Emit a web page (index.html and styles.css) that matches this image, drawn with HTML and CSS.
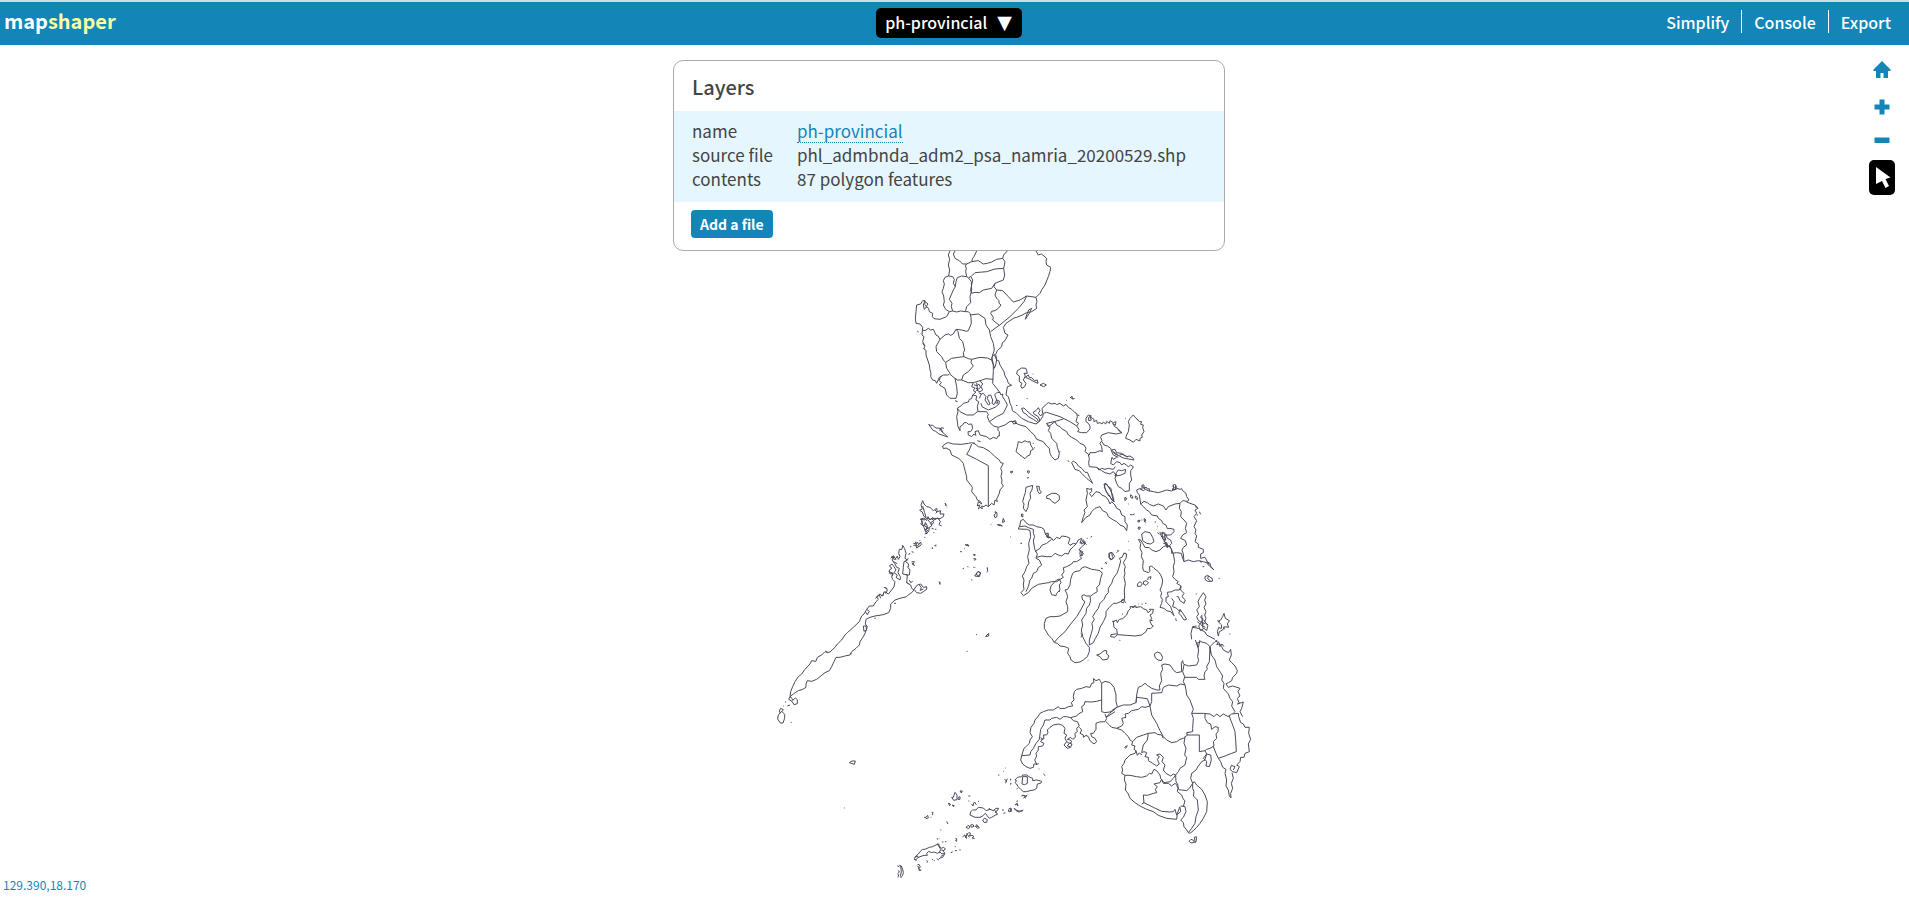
FILE: index.html
```html
<!DOCTYPE html>
<html lang="en">
<head>
<meta charset="utf-8">
<title>mapshaper</title>
<link rel="stylesheet" href="styles.css">
</head>
<body>
<header class="page-header">
  <a class="logo" href="#">map<span class="logo-accent">shaper</span></a>
  <div class="layer-slot"><button class="layer-btn" type="button">ph-provincial<span class="arrow">▼</span></button></div>
  <nav class="mode-nav">
    <button type="button">Simplify</button>
    <button type="button">Console</button>
    <button type="button">Export</button>
  </nav>
</header>
<main class="stage">
  <svg class="map" viewBox="0 45 1909 858" role="img" aria-label="ph-provincial">
    <!-- Luzon, north and centre -->
    <g transform="translate(900 240) scale(.33333)">
      <path d="M150 33L145 45 149 58 145 75 149 90 146 108M146 108L135 112 130 122 133 132 130 145 126 155 131 168 133 185 130 195 137 208 148 215 158 213 154 200 156 190 148 178 160 150 166 140 160 130 163 118 158 110 146 108M166 140L168 125 172 113 185 108 200 110 207 115 214 125 215 150 210 170 212 188 200 200 196 215 182 213 170 216 158 213M200 110L197 95 199 85 196 78 200 72 188 72 178 62 165 55 160 42 165 33M230 33L222 50 218 55 215 65 200 72M215 65L235 62 250 72 262 70 275 66 290 58 308 55 311 45 322 33M308 55L315 65 311 85 314 105 310 120 285 130 275 145 250 150 238 158 225 157 215 160 212 150 218 120 212 108 207 115M215 108L225 98 260 95 285 87 311 85M285 130L282 140 290 150 285 165 290 175 297 182 297 190 303 195 295 205 285 212 275 214 272 220 280 232 278 240 298 256M290 150L308 152 325 170 340 186 360 180 380 168 408 172M408 33L415 45 424 42 432 48 440 55 438 65 440 75 452 82 450 95 445 110 441 120 435 135 426 148 420 160 408 172 411 185 408 195 410 205 395 215 380 218 367 225 350 232 342 234 330 242 318 250 310 262 315 280 324 285 315 302 307 308 305 320 292 332 287 343M380 168L372 185 355 205 330 230 298 256 285 265 272 275M395 205L388 220 376 238 380 225 386 210Z"/>
      <path d="M148 215L140 230 120 238 102 236 97 230 98 220 88 215 86 205 78 200 84 192 76 185 74 193 80 200 73 208 70 195 75 182 68 182 62 192 50 195 48 215 46 235 48 250 60 252 68 262 66 285 72 290 68 305 75 318 72 325 78 332 78 345 88 375 90 390 93 400 92 410 98 420 106 422 110 430 118 412 125 408M66 270L75 272 85 265 92 270 100 268 108 285 114 288 120 298 135 285 145 282 152 286 160 282 168 268 185 270 200 274 205 272 214 250 213 232 210 220 205 215 196 215M210 225L235 222 255 235 258 255 268 270 272 290 280 310 283 330 278 345 275 360M120 298L108 320 110 335 125 350 130 360 137 367 155 355 175 352 192 350 190 338 194 330 188 305 178 295 174 275 168 268M137 367L140 385 150 400 145 405 130 405 120 412M192 350L205 356 215 358 240 352 262 354 275 360M215 358L213 368 220 378 205 395 190 405 185 420 172 420 165 415 150 403M185 420L205 428 220 428 240 422 258 416 280 418M275 360L280 375 280 395 278 430 290 445 300 458M287 343L290 360 296 362 300 375 312 395 315 408 322 420 325 430 335 436 322 440 318 465 325 470 328 480 330 490 335 500 337 512 350 520 365 535 385 545 408 552M283 343L275 352 283 385 287 375 290 360 283 343M120 412L118 422 124 428 118 435 135 445 140 465 150 475 168 475 172 460 170 440 165 415"/>
      <path d="M220 428L215 440 225 444 220 452 228 456 218 465 230 468 228 480 236 485 232 500 234 515M240 422L248 432 243 440 248 450 240 455 228 450M222 434l9 4 5 -6 6 10 -8 6 -7 -4M230 428l3 24M236 458l8 4M218 465L215 476 208 478 205 486 190 490 185 496 172 505 180 515 200 525 220 525 232 515M238 475L244 462 250 460 258 470 255 480 265 495 270 492 262 475 265 466 272 465 278 480 276 490 282 494 290 480 284 464 292 457 300 458 303 465 308 462 308 470 317 485 322 495 315 510 310 520 290 530 268 545 262 530 265 524 260 515 232 515M243 490L246 500 265 510 285 502 297 492 298 483 290 480 293 490 285 488M172 505L174 515 170 530 174 560 180 572 180 560 188 555 192 548 200 548 205 553 215 552 218 565 212 575 204 575 205 585 215 590 222 582 228 586 225 575 235 572 240 585 260 590 270 598 280 592 290 596 294 588 298 588 298 575 293 570 295 562 280 558 268 545M295 562L315 555 330 544 345 545 348 550 360 555 378 560 392 575 403 585 410 598 430 605 440 618 448 625 450 640 455 650 465 660 475 655 478 640 472 622 470 610 455 595 452 580 445 572 450 560 440 550 470 543 490 537M337 545l10 -3 2 8 -8 2z"/>
      <path d="M352 392L365 384 378 385 382 400 372 400 376 408 370 420 378 430 374 440 366 445 362 438 366 430 358 425 358 408 350 402ZM376 412L385 405 388 413 395 413 403 422 412 420 414 430 400 424 390 418ZM398 402h2M420 435l10 -5 9 5 -8 5zM348 497l4 -1M380 476h3M498 481h2M510 474l6 -5 2 8 6 -2M512 472l6 6M365 505L372 504 380 512 395 525 405 532 415 540 410 545 400 538 385 530 378 522 370 518ZM408 552L420 542 415 530 402 522 400 516 408 512 415 503 420 512 415 520 422 528 428 520 426 505 440 492 445 488 455 492 465 490 470 494 480 490 490 498 498 493 505 502 515 508 525 518 530 520 532 530 528 545 536 550 530 558 510 545 480 530 440 517 430 520 428 530 420 542ZM530 558L537 568 533 575 545 578 560 578 570 567 570 558 565 550 558 545 558 535 565 525 574 528 566 532 566 542 574 540 570 530 582 538 582 545 590 541 592 550 600 548 606 552 610 546 617 552 620 544 628 550 630 542 640 548 648 545 646 556 638 550 644 560 653 565 655 570 665 580M532 525l6 2M676 535h2M700 525L708 535 714 540 718 545 725 545 722 553 730 555 728 563 732 575 725 585 727 592 720 595 720 603 708 598 700 607 690 600 677 595 680 585 685 575 688 555 685 545 690 535ZM52 272l3 5M60 283l2 -2M68 310l6 8M70 325l4 4M86 553l6 3 6 0 10 8 12 1 5 10 8 6 10 10 -14 -5 -12 -4 -10 -8 -8 -3zM118 572l6 -9 8 2M122 564l6 12M165 482l8 3"/>
    </g>
    <!-- Mindoro, Bicol, Masbate, Panay -->
    <g transform="translate(900 400) scale(.33333)">
      <path d="M130 146L128 138 138 130 145 128 160 132 185 133 205 130 215 128 225 132 235 140 250 143 270 155 285 170 298 180 302 188 310 190 302 205 306 215 303 230 306 240 305 250 310 258 300 270 298 280 290 297 292 305 285 300 282 315 275 310 265 320 258 315 252 320 245 318 247 326 240 322 235 327 240 315 232 318 235 305 245 312 242 305 232 300 228 290 215 275 217 262 212 255 200 240 200 230 196 215 192 200 190 190 180 178 175 175 165 170 155 165 150 150 138 144ZM215 132L208 150 200 163 230 178 265 197 265 320M232 122l10 3M220 128l5 2M355 125L365 128 375 122 382 126 390 125 392 135 400 148 392 152 390 165 382 168 375 176 367 170 360 165 348 155 352 140ZM398 130h3M402 143l3 1M440 70L445 80 465 65 470 75 480 80 485 86 500 95 505 105 515 112 530 120 540 130 552 135 558 145 555 155 568 165M568 165L570 158 585 158 600 152 607 155 605 140 600 130 606 122 602 112 605 105 625 98 650 102 665 98 660 92 655 88M478 155h3M503 182l5 3"/>
      <path d="M606 125L612 135 622 138 632 145 635 155 640 165 655 172 M565 165L568 175 566 190 568 200 590 202 597 210 605 205 615 208 625 205 640 208 646 200M590 202L605 212 615 218 630 222 640 215 648 225M640 195L632 190 636 172 640 178 650 172M640 195L650 185 660 188 665 195 672 190 685 200 692 195 700 200 697 206 692 212 692 225 695 240 688 250 688 272 675 275 665 265 655 260 650 250 645 235 650 222M655 210l10 2 12 -4 -2 12 -15 6 -15 2 4 -10zM635 150L645 148 650 158 665 160 680 170 690 168 700 175 702 180 685 177 670 174 658 168 645 162ZM640 155l14 10 M658 165l12 -2 M670 165l14 6M515 188L520 183 530 190 535 198 545 205 555 217 562 217 570 235 578 250 572 245 560 235 545 220 538 212 525 208ZM612 252L618 250 625 260 633 265 635 280 637 290 642 305 635 300 628 285 618 275ZM560 265L570 268 575 265 575 275 568 280 575 290 588 275 600 278 605 285 617 290 625 300 630 312 635 305 645 315 650 325 660 330 665 345 675 350 675 365 682 375 680 392 672 380 660 375 650 365 640 360 625 350 620 338 608 332 600 320 585 325 575 335 570 345 558 352 545 368 550 350 555 338 552 330 562 320 558 300 562 280Z"/>
      <path d="M378 262L398 256 396 270 390 280 392 295 386 305 384 322 378 335 370 325 372 312 368 305 372 290 376 278ZM410 258l8 2 0 10 6 5 -5 7 -6 -8zM440 288L455 280 468 280 478 287 478 300 465 310 455 304 450 297 440 295ZM332 214l6 0 -2 5 -4 -1zM383 212l6 2 -3 6 -4 -3zM381 234l6 -1M365 342l4 1 -1 8 -4 -2zM355 387L360 375 362 362 370 358 378 368 388 375 400 375 410 380 425 383 432 388 435 400 445 400 445 410 455 415 460 422 470 412 480 416 485 408 500 410 510 415 505 430 510 436 520 430 528 432 535 420 545 415 540 430 548 425 555 432 545 440 537 450 548 455 545 462 540 470 545 475 530 485 520 485 515 492 500 500 490 503 492 515 485 525 490 532 470 545 455 545 445 548 415 553 395 565 385 578 370 587 363 578 372 568 370 555 372 540 367 528 375 515 380 500 387 490 383 470 388 450 386 430 392 410 390 392 380 388 355 387M360 380L375 378 385 383 400 388 400 400 404 410 400 420 402 435 405 450 412 462 408 475 418 480 425 495 415 503 410 515 400 520 395 535 390 540 385 560 378 575M405 455L420 445 425 436 440 430 455 418M410 472L425 468 440 470 455 470 465 460 475 465 485 468 495 460 505 462 510 450 520 440 528 432M435 402l12 12 M438 410l12 2 M440 400l4 14 8 -2M545 420l15 14 M543 432l14 -6M548 418l8 8M560 415h3M573 412l2 -4M470 540L478 537 483 548 478 555 480 570 470 580 468 587 455 584 450 570 453 558 462 548ZM474 574h6M362 430h3M331 411h2M285 335l6 3 0 12 -6 3 -3 -8 5 -4zM310 355l4 10 -7 2zM292 374l8 0 7 4 -12 -2zM272 373h2M228 522l8 -7 5 5 -6 8zM215 540h2M205 500l2 2M220 463l6 1 -3 4M223 476l5 2M196 434l10 4 M201 432l2 6M183 455h2M190 505h2M224 502h2M262 503l1 12M120 545l-1 8M103 437l6 -2M96 445h3M135 309l4 8M140 321h2"/>
    </g>
    <!-- Samar, Leyte -->
    <g transform="translate(1080 400) scale(.33333)">
      <path d="M172 278L170 270 178 266 190 272 196 268 205 272 220 275 235 278 245 275 260 270 275 273 290 265 300 268 305 266 308 272 318 280 320 290 327 300 320 306 330 310 345 315 354 325 345 330 350 340 342 350 350 362 342 380 348 390 345 400 350 408 345 425 355 432 355 442 370 448 370 458 362 462 362 475 375 472 382 485 390 490 393 500 402 510 388 498 380 488 370 485 355 482 340 485 325 480 312 485 308 475 304 460 290 458 275 460 275 448 268 438 275 430 272 420 262 415 258 405 272 405 282 395 282 388 270 385 262 386 258 375 248 370 245 362 235 355 232 348 215 345 208 335 200 330 190 320 182 312 180 298 178 285ZM182 312L192 304 202 308 208 313 220 318 235 312 250 318 258 330 265 320 285 312 300 310 308 302 322 304M300 310L298 325 304 335 302 350 312 360 320 370 316 385 320 398 308 405 302 415 316 422 320 435 310 442 306 450 310 462 312 485M185 402L195 395 210 398 218 412 222 425 212 432 200 430 188 422ZM175 418L182 430 180 445 186 458 184 470 190 482 188 500 190 512 205 518 210 514 208 500 215 498 222 505 235 515 242 525 248 540 246 555 240 570 245 578 242 590 247 598 245 610 240 622 252 625 260 632 272 635 282 647 276 632 272 620 258 605 258 592 265 590 262 577 275 575 285 570 298 570 303 558 290 550 295 545 285 538 278 530 282 515 280 500 284 485 280 462 275 450 270 440 262 436 250 440 240 450 228 455 215 450 208 443 195 442 188 430 182 420ZM303 558L302 570 312 580 306 590 316 600 312 610 300 602 295 590 290 590M275 595L282 605 278 620 290 625 300 635 300 628 312 645 320 658 312 660 302 645 296 640 300 630"/>
      <path d="M238 395l8 8 6 -6 6 8 -8 6 8 6 -6 8 10 4 -6 6 10 2M240 400l8 15 6 10 8 12M246 396l2 20 8 4 -2 -18zM232 398l6 5M250 430l10 2M258 440l14 0M262 432l0 12M180 265l6 4 0 -14 6 0 0 12 6 -6 4 6 6 -1 0 8M186 260l10 4M276 260l8 -8 6 8 -6 10 -8 -2 8 -6M280 254l2 16M286 256l2 14M345 320l8 2M358 335l4 8M350 345h4M135 292l6 4 -6 6zM152 284l6 5 0 6 -6 -3zM166 288l6 4 0 7 -6 -5zM132 296h2M150 344l8 0 6 -2M144 312h2M174 361l6 0 -2 5 -5 -1zM184 360h3M192 356l6 4 -4 6zM176 381l5 1 -2 6 -5 -2zM195 368h2M224 366h4M232 380h2M145 424h2M172 552l8 -7 7 6 -5 8 -9 0zM190 545l8 -3 8 6 -8 8 -7 -3zM203 540l2 -8 8 -2 -2 8M375 530l8 -4 14 10 0 8 -14 0 -8 -6zM385 528l-2 8 8 6M416 535h3M368 500h5M380 485l8 8M360 482l4 6M347 582h3M370 578L378 590 374 600 378 612 372 622 378 635 374 645 378 655 374 665 384 675 380 692 372 685 362 692 356 678 364 668 354 660 350 650 356 642 350 630 358 620 354 605 358 596ZM360 650l10 8 -8 8 12 4 -10 6 12 6M365 645l4 40M352 665l10 8M372 660l8 14M432 640L436 655 448 662 442 672 446 682 434 680 428 690 418 695 415 708 412 695 416 682 424 686 425 675 414 664 422 660 428 650ZM412 662l8 4M430 680l4 8M448 702h3M287 655l2 8M335 718L333 700 338 680 350 678M338 682L355 685 375 696 380 705 405 718M75 252L82 255 90 268 98 285 102 305 94 295 84 285 80 275 73 262ZM88 460l8 -3 8 12 -8 10 -8 -6zM76 488l5 4M64 504l4 2M110 458l6 -6M130 460l8 0"/>
    </g>
    <!-- Negros, Cebu, Bohol -->
    <g transform="translate(1000 540) scale(.33333)">
      <path d="M195 150L203 148 210 135 212 118 218 100 225 95 240 92 245 84 255 80 275 88 290 90 300 92 307 100 302 115 298 135 290 142 292 155 280 162 270 170 272 182 268 195 260 205 258 220 245 240 248 255 244 270 248 290 258 310 268 322 268 335 262 350 250 360 240 366 225 368 213 360 210 350 203 340 206 325 195 320 180 318 172 310 163 307 155 295 145 285 133 265 133 250 138 235 150 230 165 230 180 228 203 215 203 200 198 185 203 170 200 160ZM163 307L175 293 195 275 212 252 230 230 242 210 250 195 255 185 248 180 245 168 252 164 258 168 270 168M242 280l5 4 -4 8M360 72L362 62 358 55 366 52 372 40 380 42 378 55 370 68 376 80 373 90 375 100 372 112 376 130 373 150 374 178 362 185 350 190 340 190 328 202 318 215 318 228 310 245 300 262 295 280 286 295 280 308 268 315 268 300 274 280 278 265 276 250 283 238 278 230 285 218 295 205 300 190 312 178 318 165 325 158 325 145 335 130 340 115 352 98 356 85ZM362 185l6 -8 6 4 -4 8zM374 184l5 5M340 245L350 240 352 248 358 238 368 236 380 225 385 212 392 205 390 200 402 200 410 202 422 200 430 206 440 210 444 218 452 212 448 208 460 208 458 220 450 225 455 235 450 245 455 255 460 258 452 266 442 265 438 275 425 285 405 288 380 286 352 284 345 292 332 290 333 284 345 282 352 282 350 268 342 262ZM336 244h8M395 198l4 6 6 -8 6 8M414 192h2M425 192h3M435 190h4M448 240l10 2M366 222h3M290 345L300 342 312 332 320 332 320 342 327 348 322 358 308 360 300 350ZM358 301h3M263 361h2M463 342L472 336 482 340 488 352 484 362 474 360 466 354ZM327 40l8 -3 2 12 3 5 -8 6 -5 -8zM315 70l5 -5M303 85l4 1M352 32h4M386 30h2M240 34l10 6 -4 8 -6 -2zM62 10h4"/>
    </g>
    <!-- Palawan, Calamian -->
    <g transform="translate(760 490) scale(.33333)">
      <path d="M90 620L92 605 98 590 105 575 115 560 125 552 135 538 150 522 155 512 168 514 172 502 185 495 195 485 202 488 210 486 225 472 232 462 245 450 255 435 262 428 280 412 298 395 305 378 312 372 320 358 328 348 340 348 348 335 355 328 350 320 360 312 368 318 372 305 378 310 382 300 376 292M320 358l8 6 -6 10 -5 -8M375 305L385 312 395 300 402 290 405 275 398 268 395 260 400 250 390 252 388 240 396 235 388 228 396 222 402 230 408 240 402 248 412 255 408 262 420 270 422 262 414 248 418 235 410 232 404 220 396 210 402 200 395 200 404 210 412 198 415 208 420 200 416 190 418 178 426 178 428 166 434 176 438 190 435 205 442 210 432 215 430 232 428 252 442 255 440 278 452 285 455 295 462 300 455 308 448 312 440 320 420 325 405 330 392 342 392 355 386 368 370 374 345 378 330 382 318 388 316 402 322 410 318 422 315 430 310 440 300 455 298 465 288 475 275 485 270 495 255 498 240 502 228 502 222 515 215 530 208 542 195 548 180 560 170 568 155 574 142 572 138 582 138 592 128 598 115 602 100 612 90 620M310 408l8 0 2 12 -8 4zM462 298L472 285 482 282 490 292 500 290 500 298 490 305 482 310 470 308ZM478 285l6 8 -4 8 10 -4M442 230l8 10 -2 15 -10 0M402 340l6 0M345 383v4M270 490l5 2M198 482l6 6"/>
      <path d="M90 620l6 5 2 6 8 -7 6 5 0 12 -10 3 -6 -10 -10 -6zM75 636h3M82 648l8 -3M70 648h2M62 655l8 4 -4 6 8 8 0 12 -5 14 -8 0 -8 -12 2 -12 6 -6 -3 -6zM58 670l8 -6M92 697h3M483 45L488 32 492 42 500 50 510 52 520 62 530 55 532 65 542 62 540 72 552 72 550 80 540 86 525 85 510 88 500 84 495 90 482 88 488 95 482 102 490 108 498 100 502 108 498 118 506 125 508 112 515 108 512 98 522 92 515 86M483 45l4 12 -8 4 8 5 4 12 8 6M488 48l6 20 4 14M480 88l12 -4 8 8 4 -12 6 10 8 -8 6 8 8 -6 8 4M484 92l8 20 8 20M496 96l-2 12 12 6 -12 6 10 8 -10 4M504 90l12 14 6 -8M525 60l6 6 -4 4M535 88l6 6 -4 10 8 4M515 115l6 2M525 118h4M520 128h3M556 40l2 8M493 142h3M460 160l8 2 4 -6 4 8 6 -8 2 8 -8 6 -6 4 -2 -8 -8 0M466 155l4 12 8 2M478 152h3M450 170h4M455 185l6 2M446 195l4 -6M455 215l8 0 -4 8 6 4M456 218l4 8M445 205l-8 10 8 6 0 10M448 270l4 8 6 -4M440 278l6 4M515 174h4M526 168h3M537 275l4 8M600 185h4M612 176h2M615 164l12 4 -5 -6M640 195h5M640 206l8 2 -4 4M608 236h3M622 230h2M640 232h3M680 234h3M680 246h2M634 269h2M644 258l10 -14 8 4 -4 12zM648 434h3M678 438l8 -8 0 8 -10 2M620 484h3M346 325l12 -10 4 10M362 318l10 -4M372 292l10 4M386 245l12 4 -2 10M392 205l8 -8 8 12M400 215l12 6"/>
    </g>
    <!-- Mindanao -->
    <g transform="translate(1010 640) scale(.33333)">
      <path d="M35 347L42 325 50 318 58 310 60 300 67 290 60 278 63 262 72 250 75 240 85 228 90 220 100 215 115 210 130 210 145 200 150 206 165 205 175 200 188 198 184 188 192 180 190 170 193 155 200 148 215 145 228 140 240 142 245 130 252 128 250 116 258 122 268 118 272 125 275 130 285 124 300 128 312 142 318 165 318 185 322 200 315 208 305 215 285 218 275 215 275 130M275 180L260 184 245 186 225 185 222 195 215 200 218 215 205 222 200 228 182 233 170 230 160 230 150 238 140 232 125 235 120 240 105 240 100 255 92 268 88 298 78 310 70 325 62 335 60 345 35 347 32 360 38 372 48 380 60 385 70 382 72 372 80 372 74 360 80 348 78 340 85 330 85 320 98 318 102 310 92 305 98 298 92 292M92 298L102 296 100 285 110 285 114 278 112 270 120 262 130 255 145 252 158 256 165 265 162 280 170 285 165 295 170 305 162 315 172 325 182 322 186 312 178 310 186 305 180 300 172 298 182 292 188 298 196 292 195 280 202 275 200 265 208 258 202 245 190 242 182 233M208 262L215 270 210 280 220 285 220 292 228 286 235 290 240 302 252 312 260 305 255 295 245 290 242 280 250 280 258 268 258 250 268 246 285 245 290 235 285 222M170 305l8 5 -6 8 8 2"/>
      <path d="M288 245L298 255 305 262 320 265 335 270 345 280 355 290 360 300 368 305 365 315 375 318 372 328 378 332 375 340 360 345 345 360 342 370 335 380 338 390 335 400 345 406M378 332l4 14 6 -8M288 232L300 220 305 212 320 202 340 195 360 195 378 188 380 165 385 142 395 138 405 130 412 136 425 145 440 150 450 150 448 138 455 122 452 100 458 88 455 75 465 72 480 75 492 92 500 98 515 95 514 70 518 62 520 72 535 78 560 75 566 62 563 50 566 30 560 10 572 5 590 10 600 20 615 5 622 0M556 0L565 22 570 0M288 232L300 225 315 215M378 188L380 172 412 176 420 198 405 202 395 200 385 208 365 212 355 220 345 222 348 232 335 235 340 250 335 258 320 265M420 198L425 185 425 160 455 158 460 142 475 135 500 138 512 132 525 135 528 150 530 165 540 180 550 208 545 220 550 235 548 265 548 275 530 278 532 285 520 295 510 298 500 305 485 308 470 300 460 290 450 272 440 250 425 225 420 198M525 135L520 125 524 110 518 95 522 75M522 112L560 112 565 118 585 118 582 108 585 95 592 88 590 80 598 65 600 20M600 20L604 45 615 60 620 80 632 98 638 108 635 120 642 130 640 145 655 162 660 175 668 185 665 198 675 215 670 220M600 20L602 40"/>
      <path d="M616 2l8 6 -4 6 8 -2 2 8 6 -8 6 8M624 4L635 20 640 30 655 38 662 28 664 45 658 60 665 68 675 78 682 92 680 100 668 112 665 122 655 128 648 132 655 142 668 138 690 145 684 155 690 168 682 175 688 190 682 192 700 186 695 205 690 215 698 230M545 220L580 220 600 222 612 230 620 222 630 230 640 222 655 230 665 222 685 220 686 230 692 248 700 252 705 262 718 262 716 280 722 298 715 312 718 335 705 340 702 352 692 352 690 365 680 375 688 380 680 398 668 395 660 388 664 376 675 380 670 390M585 222L585 235 592 248 602 252 605 268 615 260 625 262 624 275 618 282 620 295 610 305 612 318 600 325 590 328 585 332 568 335 568 285 530 285M657 225L662 240 668 255 675 275 677 300 679 335 665 340 645 348 625 355 618 340 610 320M625 355L632 365 638 382 648 388 645 400 650 420 648 438 655 450 658 468 663 474 662 460 668 445 664 430 670 415 666 398M585 332L590 342 580 355 585 360 575 365 565 378 558 390 545 400 542 415 548 430 538 445M590 342L602 345 604 360 598 380 588 378 590 365 585 358Z"/>
      <path d="M548 430L553 425 560 435 575 448 585 465 592 485 590 515 580 535 570 550 560 562 550 572 540 580 535 578 530 570 522 560 520 548 512 540 520 532 528 515 525 500 512 498M548 430L548 445 552 455 550 468 562 480 565 510 558 530 555 550 545 565 535 578M500 437L508 450 515 450 530 452 538 445M505 440L502 455 515 465 520 478 525 482 520 500M525 290L522 310 528 325 524 345 530 352 525 375 510 385 505 395 497 405 498 425 505 437M368 305L380 292 400 285 415 280 435 278 442 283 455 285 460 295M415 280L412 300 400 315 395 338 402 335 410 338 405 350 415 352 415 362 428 370 440 378 448 372 442 358 448 350 440 345 450 342 460 352 456 365 465 375 460 390 468 400 482 408 490 402 497 405M345 406L360 406 380 410 395 412 410 408 418 400 425 402 432 388 440 392 450 405 452 415 462 428 480 425 490 415 497 405M345 406L343 420 348 432 346 450 355 462 360 475 375 488 390 498 410 508 430 515 445 526 470 535 500 538 502 520 510 500M395 492L402 488 400 465 412 466 430 460 440 458 436 448 442 440 432 432 450 428 455 418 460 430 475 430 485 438 495 430 505 440M400 487L430 502 455 514 480 516 490 515 495 508 500 525 512 515 510 502M344 322l8 -5 -5 8zM388 340l8 4M537 604l6 -6 8 3 2 6 -10 2zM553 592l6 -2 0 12 -3 6z"/>
      <path d="M15 428L20 422 15 420 22 412 35 410 38 405 50 405 60 412 68 415 68 422 80 420 95 424 92 430 82 432 80 445 72 450 60 452 50 455 40 455 32 448 24 440 20 432ZM38 410h14v20l-8 4 -8 -2zM78 374l8 -3M86 387h2M100 402l6 5M2 416v4M2 430v4M20 446h3M38 465l8 4 6 -4M42 470l5 4M20 486l2 -4M15 495l6 -3 2 6M12 505l12 8 14 0M0 510l4 5"/>
    </g>
    <!-- Sulu, Tawi-Tawi -->
    <g transform="translate(830 740) scale(.33333)">
      <path d="M58 68l8 -5 10 0 -3 10zM42 204h2M365 172l5 0 5 -15 6 8 0 14 -10 2zM385 172l5 -2 0 8 -6 0zM390 153l7 0 -3 6zM355 190l6 2 -2 5zM367 195l6 2 -3 3zM415 168h6M282 232l6 0 5 -6 2 8 -8 2M305 217h4l-2 8M302 232h2M350 244l4 8M331 270h3M415 183h3M425 192l4 6 2 -10M436 190l-3 -4 6 8M444 184h3M422 215L428 210 438 210 445 202 460 204 468 212 480 208 490 212 498 205 506 205 502 212 495 216 503 222 495 226 485 232 478 235 472 228 466 220 458 228 450 232 435 232 420 225ZM492 208l8 10M478 204v3M458 240l6 -5 8 4 -2 8 -8 0zM516 210l6 0M520 220l6 -2M535 208l8 -4 2 8 -8 4 -2 -6M540 204l2 10M552 204l6 8 10 4 12 -6M556 194l6 -4 2 8M562 183h2M574 168l8 -2 8 4M580 174l8 -4M523 118l6 4 -2 8M532 116l-4 10M540 120h3M541 130h3M520 94h2M526 84h2M504 104l4 2M408 262l6 -6 6 4 -4 6zM422 255l6 -2 4 6 -8 3zM436 258l8 0 4 5 -6 2zM440 253l2 8M398 290l6 -4 4 8 2 -10 6 -6 6 2 -4 8 8 -2 6 4 -6 4 8 2M404 284l6 12M410 280l8 12M376 296l4 0 0 8 -4 -3M362 338l6 -2M375 332h6M388 330h4M374 320h3M320 296l4 2M326 296h2M336 306h4M345 305h4"/>
      <path d="M253 355L258 348 265 342 270 335 278 328 285 328 298 322 308 320 318 315 326 312 328 318 334 325 340 322 346 326 340 334 345 340 336 342 330 336 322 340 312 336 305 338 296 334 290 340 292 346 282 346 270 350 262 355 256 360ZM326 318l6 10 -4 10M322 310l4 8M334 330l8 2M255 352l8 -4 2 6M252 358l8 3M344 342l-6 10 -8 2 -4 4M332 350l8 -6M320 356l6 4M306 358l4 2M312 362h2M289 362l4 2 -2 4M262 375l5 -2 4 8 -4 4 4 6M264 378l4 14 6 -2M202 378l6 2M208 376l6 2 4 10 2 10 -2 8 -6 8M212 378l2 16 -3 16M204 392l4 2 -3 6M202 402l4 2 -2 8"/>
    </g>
  </svg>

  <section class="layers" aria-labelledby="layers-title">
    <h1 class="layers-title" id="layers-title">Layers</h1>
    <dl class="layer-info">
      <dt>name</dt><dd><a class="layer-name" href="#">ph-provincial</a></dd>
      <dt>source file</dt><dd>phl_admbnda_adm2_psa_namria_20200529.shp</dd>
      <dt>contents</dt><dd>87 polygon features</dd>
    </dl>
    <button class="add-btn" type="button">Add a file</button>
  </section>

  <div class="tools">
    <button class="tool" type="button" aria-label="Home"><svg width="18" height="18" viewBox="0 0 18 18"><path d="M9 0L17.500 8.500v1.500H15v7h-4.500v-5h-3v5H3v-7H.5V8.500z"/></svg></button>
    <button class="tool" type="button" aria-label="Zoom in"><svg width="18" height="18" viewBox="0 0 18 18"><path d="M6.500 1.500h5v5h5v5h-5v5h-5v-5h-5v-5h5z"/></svg></button>
    <button class="tool" type="button" aria-label="Zoom out"><svg width="18" height="8" viewBox="0 0 18 8"><path d="M1.500 2.500h15v5.500h-15z"/></svg></button>
    <button class="tool tool-active" type="button" aria-label="Inspect features"><svg width="18" height="24" viewBox="0 0 18 24"><path d="M3 2L17.500 12.500 12.500 14 16 21 12.500 23 9 16 3 19z"/></svg></button>
  </div>
  <div class="coords">129.390,18.170</div>
</main>
</body>
</html>
```
FILE: styles.css
```css
* { box-sizing: border-box; }

body {
  margin: 0;
  min-height: 100vh;
  display: flex;
  flex-direction: column;
  background: #fff;
  color: #444;
  font-family: "Noto Sans CJK JP", "Noto Sans", sans-serif;
  font-size: 17px;
  line-height: 24px;
}

button {
  font: inherit;
  border: 0;
  background: none;
  cursor: pointer;
}

.page-header {
  display: grid;
  grid-template-columns: 1fr auto 1fr;
  height: 45px;
  padding-right: 11px;
  border-top: 2px solid #d3dce1;
  background: #1385b7;
  color: #fff;
}

.logo {
  padding: 7px 4px;
  color: #fff;
  font-size: 20px;
  font-weight: 700;
  line-height: 24px;
  text-decoration: none;
}

.logo-accent { color: #ffffa5; }

.layer-slot {
  padding-top: 6px;
}

.layer-btn {
  display: flex;
  height: 30px;
  padding: 2px 10px 0 9px;
  border-radius: 5px;
  background: #000;
  color: #fff;
  font-size: 16px;
  font-weight: 500;
}

.arrow {
  margin-left: 10px;
  font-family: "DejaVu Sans", sans-serif;
  font-size: 19px;
}

.mode-nav {
  display: flex;
  justify-content: flex-end;
  align-items: flex-start;
  padding-top: 8px;
}

.mode-nav button {
  height: 23px;
  padding: 0 12px;
  color: #fff;
  font-size: 16px;
  font-weight: 500;
  line-height: 20px;
}

.mode-nav button:last-child { padding-right: 7px; }

.mode-nav button + button { border-left: 1px solid #fff; }

.stage {
  position: relative;
  flex: 1;
  display: flex;
  justify-content: center;
  align-items: flex-start;
  padding: 15px 11px 0 0;
}

.map {
  position: absolute;
  inset: 0;
  width: 100%;
  height: 100%;
  fill: none;
  stroke: #4c4a5c;
}

.map path {
  stroke-width: 1px;
  vector-effect: non-scaling-stroke;
}

.layers {
  position: relative;
  width: 552px;
  padding-bottom: 12px;
  border: 1px solid #aaa;
  border-radius: 10px;
  background: #fff;
}

.layers-title {
  margin: 0;
  padding: 14px 18px 12px;
  font-size: 20px;
  font-weight: 500;
  line-height: 24px;
}

.layer-info {
  display: grid;
  grid-template-columns: 105px 1fr;
  margin: 0 0 8px;
  padding: 8px 18px 11px;
  background: #e5f6ff;
}

.layer-info dt,
.layer-info dd {
  margin: 0;
}

.layer-name {
  display: inline-block;
  border-bottom: 1px dotted #1385b7;
  color: #1385b7;
  line-height: 23px;
  text-decoration: none;
}

.add-btn {
  height: 28px;
  margin-left: 17px;
  padding: 0 9px;
  border-radius: 4px;
  background: #1385b7;
  color: #fff;
  font-size: 14px;
  font-weight: 700;
}

.tools {
  position: absolute;
  top: 16px;
  right: 14px;
  display: flex;
  flex-direction: column;
  align-items: center;
}

.tool {
  display: flex;
  padding: 0;
  margin-bottom: 19px;
  fill: #1385b7;
}

.tool-active {
  padding: 5px 4px 6px;
  margin: -2px 0 0;
  border-radius: 5px;
  background: #000;
  fill: #fff;
}

.coords {
  position: absolute;
  left: 3px;
  bottom: 6px;
  color: #1385b7;
  font-size: 12px;
  line-height: 24px;
}
```
